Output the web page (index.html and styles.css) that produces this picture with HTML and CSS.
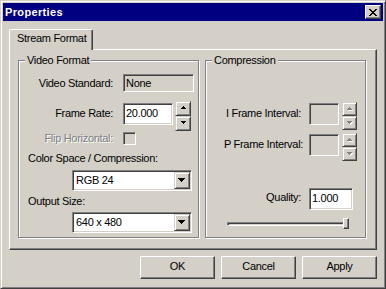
FILE: index.html
```html
<!DOCTYPE html>
<html lang="en">
<head>
<meta charset="utf-8">
<title>Properties</title>
<link rel="stylesheet" href="styles.css">
</head>
<body>
<div class="window">
  <div class="titlebar">
    <span class="title">Properties</span>
    <div class="close">
      <svg class="glyph xglyph" width="8" height="7" viewBox="0 0 8 7" shape-rendering="crispEdges"><path d="M0 0h2v1H0zM6 0h2v1H6zM1 1h2v1H1zM5 1h2v1H5zM2 2h4v1H2zM3 3h2v1H3zM2 4h4v1H2zM1 5h2v1H1zM5 5h2v1H5zM0 6h2v1H0zM6 6h2v1H6z" fill="#000"/></svg>
    </div>
  </div>
  <div class="content">
    <div class="tabs"><div class="tab">Stream Format</div></div>
    <div class="panel">
      <div class="group video">
        <div class="legend">Video Format</div>
        <div class="row r-std"><span class="lbl">Video Standard:</span><div class="field std">None</div></div>
        <div class="row r-rate">
          <span class="lbl">Frame Rate:</span>
          <div class="field edit rate">20.000</div>
          <div class="spin">
            <div class="sbtn"><svg class="glyph arr" width="5" height="3" viewBox="0 0 5 3" shape-rendering="crispEdges"><path d="M2 0h1v1H2zM1 1h3v1H1zM0 2h5v1H0z" fill="#000"/></svg></div>
            <div class="sbtn"><svg class="glyph arr" width="5" height="3" viewBox="0 0 5 3" shape-rendering="crispEdges"><path d="M0 0h5v1H0zM1 1h3v1H1zM2 2h1v1H2z" fill="#000"/></svg></div>
          </div>
        </div>
        <div class="row r-flip"><span class="lbl disabled">Flip Horizontal:</span><div class="check"></div></div>
        <div class="text t-cs">Color Space / Compression:</div>
        <div class="combo c1"><span class="cval">RGB 24</span><div class="drop"><svg class="glyph darr" width="7" height="4" viewBox="0 0 7 4" shape-rendering="crispEdges"><path d="M0 0h7v1H0zM1 1h5v1H1zM2 2h3v1H2zM3 3h1v1H3z" fill="#000"/></svg></div></div>
        <div class="text t-os">Output Size:</div>
        <div class="combo c2"><span class="cval">640 x 480</span><div class="drop"><svg class="glyph darr" width="7" height="4" viewBox="0 0 7 4" shape-rendering="crispEdges"><path d="M0 0h7v1H0zM1 1h5v1H1zM2 2h3v1H2zM3 3h1v1H3z" fill="#000"/></svg></div></div>
      </div>
      <div class="group comp">
        <div class="legend">Compression</div>
        <div class="crow r-i">
          <span class="clbl">I Frame Interval:</span>
          <div class="field cedit"></div>
          <div class="spin cspin">
            <div class="sbtn small"><svg class="glyph arr" width="6" height="4" viewBox="0 0 6 4" shape-rendering="crispEdges"><path d="M3 1h1v1H3zM2 2h3v1H2zM1 3h5v1H1z" fill="#fff"/><path d="M2 0h1v1H2zM1 1h3v1H1zM0 2h5v1H0z" fill="#808080"/></svg></div>
            <div class="sbtn small"><svg class="glyph arr" width="6" height="4" viewBox="0 0 6 4" shape-rendering="crispEdges"><path d="M1 1h5v1H1zM2 2h3v1H2zM3 3h1v1H3z" fill="#fff"/><path d="M0 0h5v1H0zM1 1h3v1H1zM2 2h1v1H2z" fill="#808080"/></svg></div>
          </div>
        </div>
        <div class="crow r-p">
          <span class="clbl">P Frame Interval:</span>
          <div class="field cedit"></div>
          <div class="spin cspin">
            <div class="sbtn small"><svg class="glyph arr" width="6" height="4" viewBox="0 0 6 4" shape-rendering="crispEdges"><path d="M3 1h1v1H3zM2 2h3v1H2zM1 3h5v1H1z" fill="#fff"/><path d="M2 0h1v1H2zM1 1h3v1H1zM0 2h5v1H0z" fill="#808080"/></svg></div>
            <div class="sbtn small"><svg class="glyph arr" width="6" height="4" viewBox="0 0 6 4" shape-rendering="crispEdges"><path d="M1 1h5v1H1zM2 2h3v1H2zM3 3h1v1H3z" fill="#fff"/><path d="M0 0h5v1H0zM1 1h3v1H1zM2 2h1v1H2z" fill="#808080"/></svg></div>
          </div>
        </div>
        <div class="crow r-q">
          <span class="clbl qlbl">Quality:</span>
          <div class="field edit qedit">1.000</div>
        </div>
        <div class="slider"><div class="track"></div><div class="thumb"></div></div>
      </div>
    </div>
    <div class="buttons">
      <div class="btn">OK</div>
      <div class="btn">Cancel</div>
      <div class="btn">Apply</div>
    </div>
  </div>
</div>
</body>
</html>
```

FILE: styles.css
```css
* { box-sizing: border-box; }
html, body { margin: 0; padding: 0; }
body {
  width: 386px;
  height: 289px;
  overflow: hidden;
  background: #d4d0c8;
  font-family: "Liberation Sans", Arial, sans-serif;
  font-size: 11px;
  line-height: 13px;
  letter-spacing: -0.3px;
  color: #000;
}
.glyph { display: block; }

.window {
  width: 386px;
  height: 289px;
  border: 1px solid;
  border-color: #d4d0c8 #404040 #404040 #d4d0c8;
  box-shadow: inset 1px 1px 0 #fff, inset -1px -1px 0 #808080;
  padding: 2px;
  display: flex;
  flex-direction: column;
}

.titlebar {
  height: 18px;
  flex-shrink: 0;
  background: #000080;
  display: flex;
  align-items: center;
  justify-content: space-between;
  padding: 0 2px 0 2px;
}
.title {
  color: #fff;
  font-weight: bold;
  font-size: 11px;
  letter-spacing: 0.35px;
}
.close {
  width: 16px;
  height: 14px;
  background: #d4d0c8;
  border: 1px solid;
  border-color: #fff #404040 #404040 #fff;
  box-shadow: inset -1px -1px 0 #808080;
}
.xglyph { margin: 3px 0 0 3px; }

.content {
  padding: 8px 6px 0 6px;
  display: flex;
  flex-direction: column;
}

.tabs { display: flex; height: 20px; }
.tab {
  position: relative;
  z-index: 1;
  width: 84px;
  height: 21px;
  background: #d4d0c8;
  border-left: 1px solid #fff;
  border-top: 1px solid #fff;
  border-right: 1px solid #404040;
  border-radius: 2px 2px 0 0;
  box-shadow: inset -1px 0 0 #808080;
  padding: 2px 0 0 7px;
  white-space: nowrap;
}

.panel {
  height: 201px;
  border: 1px solid;
  border-color: #fff #404040 #404040 #fff;
  box-shadow: inset -1px -1px 0 #808080;
  padding: 10px 10px 0 8px;
  display: flex;
  align-items: flex-start;
  gap: 6px;
}

.group {
  flex-shrink: 0;
  height: 178px;
  border: 1px solid #808080;
  box-shadow: 1px 1px 0 #fff, inset 1px 1px 0 #fff;
  display: flex;
  flex-direction: column;
  align-items: flex-start;
}
.video { width: 181px; }
.comp { width: 161px; }

.legend {
  margin: -7px 0 0 6px;
  padding: 0 2px;
  background: #d4d0c8;
  white-space: nowrap;
}

.field {
  border: 1px solid;
  border-color: #808080 #fff #fff #808080;
  box-shadow: inset 1px 1px 0 #404040, inset -1px -1px 0 #d4d0c8;
  padding: 0 2px;
  background: #d4d0c8;
  white-space: nowrap;
}
.edit { background: #fff; line-height: 18px; }

.row { display: flex; }
.lbl {
  width: 94px;
  margin-right: 10px;
  text-align: right;
  white-space: nowrap;
}
.disabled { color: #808080; text-shadow: 1px 1px 0 #fff; }

.r-std { margin-top: 7px; align-items: center; }
.std { width: 71px; height: 18px; line-height: 16px; }

.r-rate { margin-top: 9px; align-items: flex-start; height: 30px; }
.r-rate .lbl { margin-top: 6px; }
.rate { width: 50px; height: 22px; margin-top: 2px; }

.spin { display: flex; flex-direction: column; margin-left: 2px; }
.sbtn {
  width: 16px;
  height: 15px;
  border: 1px solid;
  border-color: #d4d0c8 #404040 #404040 #d4d0c8;
  box-shadow: inset 1px 1px 0 #fff, inset -1px -1px 0 #808080;
}
.sbtn .arr { margin: 4px 0 0 5px; }

.r-flip { margin-top: 1px; align-items: center; }
.check {
  width: 13px;
  height: 13px;
  border: 1px solid;
  border-color: #808080 #fff #fff #808080;
  box-shadow: inset 1px 1px 0 #404040, inset -1px -1px 0 #d4d0c8;
  background: #d4d0c8;
}

.text { padding-left: 9px; white-space: nowrap; }
.t-cs { margin-top: 7px; }
.t-os { margin-top: 4px; }

.combo {
  width: 120px;
  height: 21px;
  margin-left: 53px;
  border: 1px solid;
  border-color: #808080 #fff #fff #808080;
  box-shadow: inset 1px 1px 0 #404040, inset -1px -1px 0 #d4d0c8;
  background: #fff;
  padding: 1px;
  display: flex;
}
.c1 { margin-top: 5px; }
.c2 { margin-top: 4px; }
.cval { flex: 1; padding-left: 2px; line-height: 17px; white-space: nowrap; }
.drop {
  width: 16px;
  height: 17px;
  background: #d4d0c8;
  border: 1px solid;
  border-color: #d4d0c8 #404040 #404040 #d4d0c8;
  box-shadow: inset 1px 1px 0 #fff, inset -1px -1px 0 #808080;
}
.darr { margin: 5px 0 0 3px; }

.crow { display: flex; align-items: flex-start; margin-left: 12px; }
.clbl { width: 91px; text-align: center; margin-top: 5px; white-space: nowrap; }
.r-i { margin-top: 35px; }
.r-p { margin-top: 3px; }
.cedit { width: 30px; height: 22px; margin-top: 1px; }
.cspin { margin-left: 3px; }
.sbtn.small { width: 15px; height: 14px; }
.sbtn.small .arr { margin: 4px 0 0 4px; }

.r-q { margin-top: 27px; }
.qlbl { text-align: right; padding-right: 8px; margin-top: 3px; }
.qedit { width: 44px; height: 22px; }

.slider {
  position: relative;
  width: 122px;
  height: 11px;
  margin: 8px 0 0 21px;
}
.track {
  width: 121px;
  height: 4px;
  margin-top: 4px;
  border: 1px solid;
  border-color: #808080 #fff #fff #808080;
  box-shadow: inset 1px 1px 0 #404040, inset -1px -1px 0 #d4d0c8;
}
.thumb {
  position: absolute;
  top: 0;
  right: 0;
  width: 6px;
  height: 11px;
  background: #d4d0c8;
  border: 1px solid;
  border-color: #fff #404040 #404040 #fff;
  box-shadow: inset -1px -1px 0 #808080;
}

.buttons {
  display: flex;
  justify-content: flex-end;
  gap: 6px;
  margin-top: 6px;
}
.btn {
  width: 75px;
  height: 23px;
  border: 1px solid;
  border-color: #fff #404040 #404040 #fff;
  box-shadow: inset -1px -1px 0 #808080;
  text-align: center;
  line-height: 19px;
}
```
